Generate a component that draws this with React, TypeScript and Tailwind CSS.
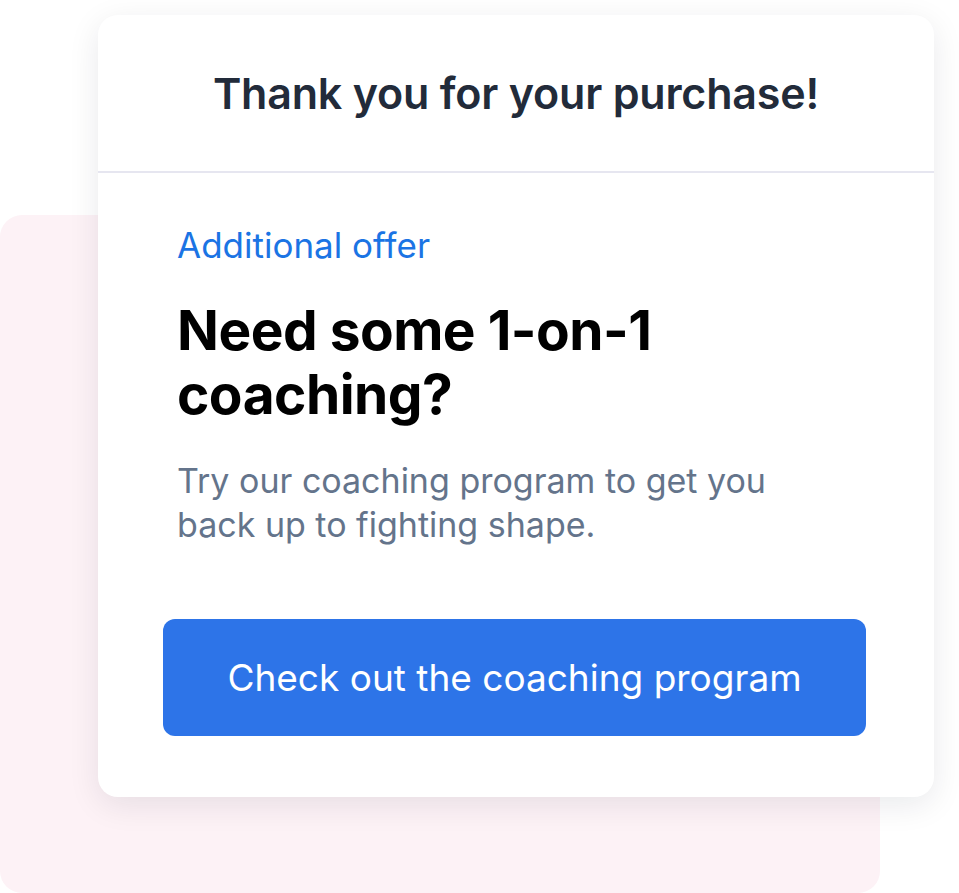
export default function App() {
  return (
    <div className="relative w-[959px] h-[893px] overflow-hidden bg-white font-['Inter',sans-serif]">
      {/* pink backdrop behind card */}
      <div className="absolute left-0 top-[215px] w-[880px] h-[678px] rounded-[22px] bg-[#fdf2f6]" />

      {/* card */}
      <div className="absolute left-[98px] top-[15px] w-[836px] h-[782px] rounded-[20px] bg-white shadow-[0_8px_32px_rgba(15,23,42,0.09)] flex flex-col">
        <div className="h-[158px] flex items-center justify-center border-b-2 border-[#e6e6f0]">
          <h1 className="text-[43px] font-semibold text-[#222b3a] tracking-[-0.2px]">
            Thank you for your purchase!
          </h1>
        </div>

        <div className="flex flex-col pl-[65px] pr-[68px] pt-[52px]">
          <div className="pl-[14px]">
            <p className="text-[35px] leading-[40px] text-[#1b74e4]">Additional offer</p>
            <h2 className="mt-[33px] text-[55px] leading-[64px] font-bold text-black tracking-[-0.5px]">
              Need some 1-on-1
              <br />
              coaching?
            </h2>
            <p className="mt-[33px] text-[34px] leading-[44px] text-[#64748b]">
              Try our coaching program to get you
              <br />
              back up to fighting shape.
            </p>
          </div>

          <button className="mt-[72px] h-[117px] w-full rounded-[12px] bg-[#2d74e8] text-white text-[37px]">
            Check out the coaching program
          </button>
        </div>
      </div>
    </div>
  );
}
